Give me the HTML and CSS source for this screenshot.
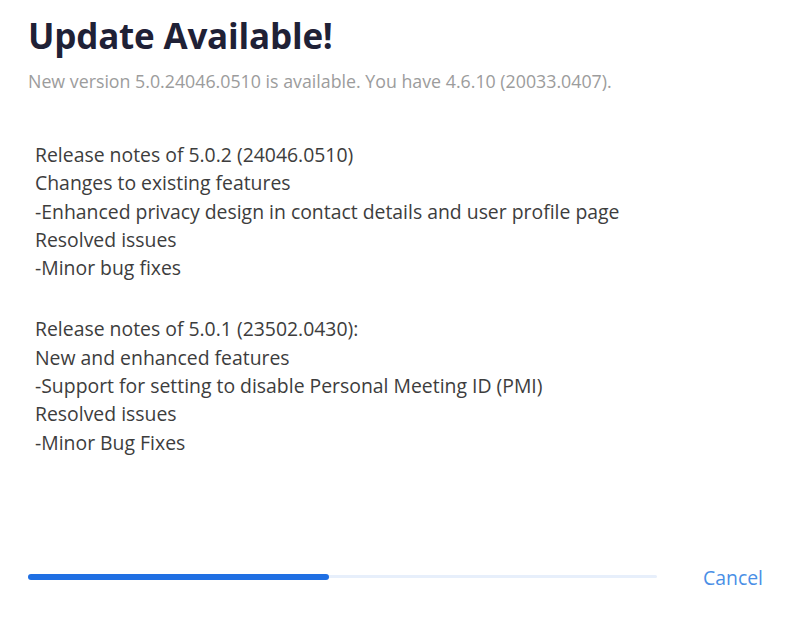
FILE: index.html
```html
<!DOCTYPE html>
<html>
<head>
<meta charset="utf-8">
<link rel="stylesheet" href="styles.css">
</head>
<body>
<div class="dialog">
  <header class="head">
    <h1 class="title">Update Available!</h1>
    <p class="subtitle">New version 5.0.24046.0510 is available. You have 4.6.10 (20033.0407).</p>
  </header>
  <div class="notes">
    <div class="block">
      <div class="line">Release notes of 5.0.2 (24046.0510)</div>
      <div class="line">Changes to existing features</div>
      <div class="line">-Enhanced privacy design in contact details and user profile page</div>
      <div class="line">Resolved issues</div>
      <div class="line">-Minor bug fixes</div>
    </div>
    <div class="block">
      <div class="line">Release notes of 5.0.1 (23502.0430):</div>
      <div class="line">New and enhanced features</div>
      <div class="line">-Support for setting to disable Personal Meeting ID (PMI)</div>
      <div class="line">Resolved issues</div>
      <div class="line">-Minor Bug Fixes</div>
    </div>
  </div>
  <footer class="foot">
    <div class="track"><div class="fill" style="width: 47.9%"></div></div>
    <button class="cancel">Cancel</button>
  </footer>
</div>
</body>
</html>
```
FILE: styles.css
```css
html, body {
  margin: 0;
  padding: 0;
  background: #ffffff;
}
body {
  font-family: "Open Sans", "Noto Sans", sans-serif;
  width: 796px;
  height: 628px;
  overflow: hidden;
}
.dialog {
  display: flex;
  flex-direction: column;
  height: 628px;
  padding: 0 33px 0 28px;
  box-sizing: border-box;
}
.head {
  padding-top: 16px;
}
.title {
  margin: 0;
  font-size: 35px;
  line-height: 40px;
  font-weight: 700;
  color: #1f2136;
  letter-spacing: -0.2px;
}
.subtitle {
  margin: 13px 0 0;
  font-size: 17.8px;
  line-height: 24px;
  color: #9c9c9c;
}
.notes {
  margin-top: 48px;
  padding-left: 7px;
  display: flex;
  flex-direction: column;
  gap: 33px;
}
.line {
  font-size: 19.4px;
  line-height: 28.3px;
  color: #3d3d3d;
}
.foot {
  margin-top: auto;
  margin-bottom: 38px;
  display: flex;
  align-items: center;
}
.track {
  width: 629px;
  height: 3px;
  background: #e7effb;
  border-radius: 2px;
  display: flex;
  align-items: center;
}
.fill {
  height: 6px;
  background: #1f6fe3;
  border-radius: 3px;
}
.cancel {
  margin-left: auto;
  margin-top: 3px;
  background: none;
  border: 0;
  padding: 0;
  font-family: inherit;
  font-size: 19.4px;
  line-height: 24px;
  color: #4a8fe6;
  cursor: pointer;
}
```
